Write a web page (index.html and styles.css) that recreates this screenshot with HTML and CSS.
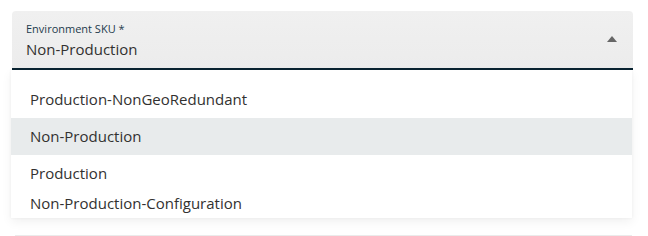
FILE: index.html
```html
<!DOCTYPE html>
<html lang="en">
<head>
  <meta charset="UTF-8" />
  <title>Environment SKU</title>
  <link rel="stylesheet" href="styles.css">
</head>
<body>
  <div class="page">
    <div class="field">
      <div class="field-body">
        <label class="field-label">Environment SKU *</label>
        <div class="field-value">Non-Production</div>
      </div>
      <span class="caret"></span>
    </div>

    <div class="field-next"></div>

    <ul class="menu">
      <li class="option">Production-NonGeoRedundant</li>
      <li class="option selected">Non-Production</li>
      <li class="option">Production</li>
      <li class="option">Non-Production-Configuration</li>
    </ul>
  </div>
</body>
</html>
```

FILE: styles.css
```css
body {
  margin: 0;
  background: white;
  font-family: "Open Sans", "Noto Sans", sans-serif;
  color: #323130;
}

.page {
  position: relative;
  padding: 11px 15px 0 12px;
}

.field {
  display: flex;
  align-items: center;
  width: 621px;
  height: 59px;
  box-sizing: border-box;
  padding: 0 16px 0 14px;
  background: linear-gradient(to bottom, #f0f0f0, #ececec);
  border-radius: 4px 4px 0 0;
  border-bottom: 2px solid #0b2533;
}

.field-body {
  flex: 1;
}

.field-label {
  display: block;
  font-size: 11px;
  color: #1d3b4c;
  line-height: 14px;
  margin-top: 3px;
}

.field-value {
  font-size: 15px;
  line-height: 22px;
  color: #323130;
  margin-top: 2px;
}

.caret {
  width: 0;
  height: 0;
  border-left: 5px solid transparent;
  border-right: 5px solid transparent;
  border-bottom: 6px solid #666;
  margin-bottom: 2px;
}

.field-next {
  width: 617px;
  height: 165px;
  margin-left: 3px;
  border-bottom: 1px solid #ebebeb;
}

.menu {
  position: absolute;
  top: 70px;
  left: 11px;
  width: 621px;
  height: 148px;
  margin: 0;
  padding: 11px 0 0;
  list-style: none;
  background: white;
  box-sizing: border-box;
  overflow: hidden;
  box-shadow: 0 4px 10px rgba(0,0,0,0.06), 0 0 3px rgba(0,0,0,0.05);
}

.option {
  height: 37px;
  line-height: 37px;
  padding-left: 19px;
  font-size: 15px;
  color: #323130;
}

.option.selected {
  background-color: #e8ebec;
}

.option:last-child {
  line-height: 22px;
}
```
